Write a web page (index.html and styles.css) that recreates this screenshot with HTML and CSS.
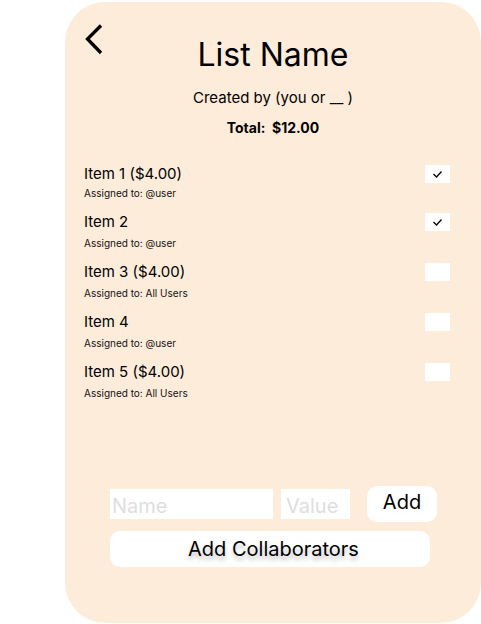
FILE: index.html
```html
<!DOCTYPE html>
<html lang="en">
<head>
<meta charset="utf-8">
<title>List Name</title>
<link rel="stylesheet" href="styles.css">
</head>
<body>
<div class="page">
  <main class="card">
    <header class="header">
      <svg class="back" viewBox="0 0 22 32" aria-label="Back">
        <polyline points="18,2.5 4.5,16 18,30" fill="none" stroke="#000" stroke-width="3.3" stroke-linejoin="miter"/>
      </svg>
      <h1 class="title">List Name</h1>
    </header>
    <p class="creator">Created by (you or __ )</p>
    <p class="total">Total:&nbsp; $12.00</p>

    <ul class="items">
      <li class="row row--first">
        <span class="name">Item 1 ($4.00)</span>
        <span class="check"><svg viewBox="0 0 25 18"><polyline points="8.5,9 11.5,12 16.5,6.5" fill="none" stroke="#000" stroke-width="1.3"/></svg></span>
        <span class="assigned">Assigned to: @user</span>
      </li>
      <li class="row">
        <span class="name">Item 2</span>
        <span class="check"><svg viewBox="0 0 25 18"><polyline points="8.5,9 11.5,12 16.5,6.5" fill="none" stroke="#000" stroke-width="1.3"/></svg></span>
        <span class="assigned">Assigned to: @user</span>
      </li>
      <li class="row">
        <span class="name">Item 3 ($4.00)</span>
        <span class="check"></span>
        <span class="assigned">Assigned to: All Users</span>
      </li>
      <li class="row">
        <span class="name">Item 4</span>
        <span class="check"></span>
        <span class="assigned">Assigned to: @user</span>
      </li>
      <li class="row">
        <span class="name">Item 5 ($4.00)</span>
        <span class="check"></span>
        <span class="assigned">Assigned to: All Users</span>
      </li>
    </ul>

    <form class="form">
      <div class="add-row">
        <input class="field field--name" type="text" placeholder="Name">
        <input class="field field--value" type="text" placeholder="Value">
        <button class="btn btn--add" type="button">Add</button>
      </div>
      <button class="btn btn--collab" type="button">Add Collaborators</button>
    </form>
  </main>
</div>
</body>
</html>
```

FILE: styles.css
```css
* { box-sizing: border-box; }

html, body {
  margin: 0;
  background: #ffffff;
}

body {
  font-family: Inter, "Noto Sans", sans-serif;
  color: #000;
}

.page {
  padding: 2px 0 0 65px;
}

.card {
  width: 416px;
  height: 621px;
  background: #feecdb;
  border-radius: 40px;
  padding-top: 21px;
  display: flex;
  flex-direction: column;
}

.header {
  display: grid;
  grid-template-columns: 1fr auto 1fr;
  align-items: start;
}

.back {
  display: block;
  width: 22px;
  height: 32px;
  margin-left: 18px;
}

.title {
  margin: 12px 0 0;
  font-size: 32px;
  line-height: 40px;
  font-weight: 400;
  text-align: center;
}

.creator {
  margin: 12.5px 0 0;
  font-size: 15px;
  line-height: 20px;
  text-align: center;
}

.total {
  margin: 11.5px 0 0;
  font-size: 14px;
  line-height: 18px;
  font-weight: 700;
  text-align: center;
}

.items {
  list-style: none;
  margin: 24.5px 0 0;
  padding: 0 31px 0 19px;
}

.row {
  display: grid;
  grid-template-columns: 1fr 25px;
  grid-template-rows: 20px 14px;
  row-gap: 4.5px;
  height: 50px;
}

.row--first {
  grid-template-rows: 22px 14px;
  row-gap: 2.5px;
}

.name {
  grid-column: 1;
  grid-row: 1;
  align-self: end;
  font-size: 15px;
  line-height: 20px;
}

.check {
  grid-column: 2;
  grid-row: 1;
  align-self: end;
  width: 25px;
  height: 18px;
  margin-bottom: 0.5px;
  background: #ffffff;
}

.check svg {
  display: block;
  width: 25px;
  height: 18px;
}

.assigned {
  grid-column: 1 / span 2;
  grid-row: 2;
  font-size: 10px;
  line-height: 14px;
  color: #111;
}

.form {
  margin: auto 0 0;
  padding: 0 0 56px 45px;
}

.add-row {
  display: flex;
  align-items: center;
}

.field {
  height: 30px;
  border: 0;
  outline: 0;
  background: #ffffff;
  font-family: Inter, "Noto Sans", sans-serif;
  font-size: 20px;
  line-height: 26px;
  padding: 4px 0 0 2px;
  color: #000;
}

.field::placeholder {
  color: #dedede;
  opacity: 1;
}

.field--name {
  width: 163px;
  margin-right: 8px;
}

.field--value {
  width: 69px;
  margin-right: 17px;
  padding-left: 5px;
}

.btn {
  border: 0;
  background: #ffffff;
  border-radius: 10px;
  font-family: Inter, "Noto Sans", sans-serif;
  font-size: 20px;
  color: #000;
  padding: 0;
  cursor: pointer;
}

.btn--add {
  width: 70px;
  height: 36px;
  line-height: 32px;
  padding-bottom: 4px;
}

.btn--collab {
  display: block;
  width: 320px;
  height: 36px;
  margin-top: 9px;
  line-height: 36px;
  padding-left: 7px;
  text-shadow: 0 4px 4px rgba(0, 0, 0, 0.25);
}
```
